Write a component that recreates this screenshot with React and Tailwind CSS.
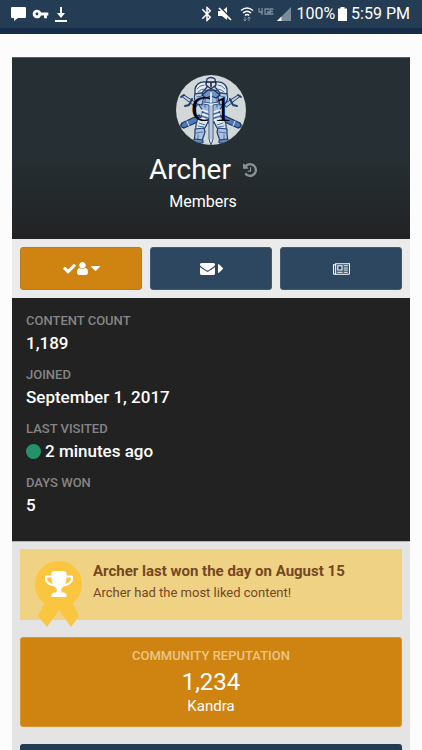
import { MdVpnKey, MdBluetooth } from "react-icons/md";

const icons = {
  check: {
    viewBox: "100 256 1592 1400",
    d: "M1671 566q0 40-28 68l-724 724-136 136q-28 28-68 28t-68-28l-136-136-362-362q-28-28-28-68t28-68l136-136q28-28 68-28t68 28l294 295 656-657q28-28 68-28t68 28l136 136q28 28 28 68z",
  },
  user: {
    viewBox: "256 128 1280 1536",
    d: "M1536 1399q0 109-62.5 187t-150.5 78h-854q-88 0-150.5-78t-62.5-187q0-85 8.5-160.5t31.5-152 58.5-131 94-89 134.5-34.5q131 128 313 128t313-128q76 0 134.5 34.5t94 89 58.5 131 31.5 152 8.5 160.5zm-256-887q0 159-112.5 271.5t-271.5 112.5-271.5-112.5-112.5-271.5 112.5-271.5 271.5-112.5 271.5 112.5 112.5 271.5z",
  },
  caretDown: {
    viewBox: "384 640 1024 576",
    d: "M1408 704q0 26-19 45l-448 448q-19 19-45 19t-45-19l-448-448q-19-19-19-45t19-45 45-19h896q26 0 45 19t19 45z",
  },
  caretRight: {
    viewBox: "0 0 576 1024",
    d: "M576 512q0 26-19 45l-448 448q-19 19-45 19t-45-19-19-45v-896q0-26 19-45t45-19 45 19l448 448q19 19 19 45z",
  },
  envelope: {
    viewBox: "0 256 1792 1408",
    d: "M1792 710v794q0 66-47 113t-113 47h-1472q-66 0-113-47t-47-113v-794q44 49 101 87 362 246 497 345 57 42 92.5 65.5t94.5 48 110 24.5h2q51 0 110-24.5t94.5-48 92.5-65.5q170-123 498-345 57-39 100-87zm0-294q0 79-49 151t-122 123q-376 261-468 325-10 7-42.5 31t-54 38.5-52 32.5-57.5 27-50 9h-2q-23 0-50-9t-57.5-27-52-32.5-54-38.5-42.5-31q-91-64-262-182.5t-205-142.5q-62-42-117-115.5t-55-136.5q0-78 41.5-130t118.5-52h1472q65 0 112.5 47t47.5 113z",
  },
  newspaper: {
    viewBox: "0 128 2048 1408",
    d: "M1024 512h-384v384h384v-384zm128 640v128h-640v-128h640zm0-768v640h-640v-640h640zm640 768v128h-512v-128h512zm0-256v128h-512v-128h512zm0-256v128h-512v-128h512zm0-256v128h-512v-128h512zm-1536 960v-960h-128v960q0 26 19 45t45 19 45-19 19-45zm1664 0v-1088h-1536v1088q0 33-11 64h1483q26 0 45-19t19-45zm128-1216v1216q0 80-56 136t-136 56h-1664q-80 0-136-56t-56-136v-1088h256v-128h1792z",
  },
  history: {
    viewBox: "0 128 1536 1536",
    d: "M1536 896q0 156-61 298t-164 245-245 164-298 61q-172 0-327-72.5t-264-204.5q-7-10-6.5-22.5t8.5-20.5l137-138q10-9 25-9 16 2 23 12 73 95 179 147t225 52q104 0 198.5-40.5t163.5-109.5 109.5-163.5 40.5-198.5-40.5-198.5-109.5-163.5-163.5-109.5-198.5-40.5q-98 0-188 35.5t-160 101.5l137 138q31 30 14 69-17 40-59 40h-448q-26 0-45-19t-19-45v-448q0-42 40-59 39-17 69 14l130 129q107-101 244.5-156.5t284.5-55.5q156 0 298 61t245 164 164 245 61 298zm-640-288v448q0 14-9 23t-23 9h-320q-14 0-23-9t-9-23v-64q0-14 9-23t23-9h224v-352q0-14 9-23t23-9h64q14 0 23 9t9 23z",
  },
  trophy: {
    viewBox: "64 128 1664 1536",
    d: "M522 883q-74-162-74-371h-256v96q0 78 94.5 162t235.5 113zm1078-275v-96h-256q0 209-74 371 141-29 235.5-113t94.5-162zm128-128v128q0 71-41.5 143t-112 130-173 97.5-215.5 44.5q-42 54-95 95-38 34-52.5 72.5t-14.5 89.5q0 54 30.5 91t97.5 37q75 0 133.5 45.5t58.5 114.5v64q0 14-9 23t-23 9h-832q-14 0-23-9t-9-23v-64q0-69 58.5-114.5t133.5-45.5q67 0 97.5-37t30.5-91q0-51-14.5-89.5t-52.5-72.5q-53-41-95-95-113-5-215.5-44.5t-173-97.5-112-130-41.5-143v-128q0-40 28-68t68-28h288v-96q0-66 47-113t113-47h576q66 0 113 47t47 113v96h288q40 0 68 28t28 68z",
  },
};

const Icon = ({ name, className }) => (
  <svg viewBox={icons[name].viewBox} className={`fill-current ${className}`} aria-hidden="true">
    <path d={icons[name].d} />
  </svg>
);

const StatusBar = () => (
  <header className="flex h-[34px] shrink-0 items-center justify-between border-b-6 border-[#172b4a] bg-[#253c55] pr-3 pl-[11px] text-white">
    <div className="flex items-center gap-[6px]">
      <svg viewBox="0 0 15 14" className="h-[14px] w-[15px] fill-current">
        <path d="M1 0h13q1 0 1 1v9q0 1-1 1H7l-4 3v-3H1q-1 0-1-1V1q0-1 1-1z" />
      </svg>
      <MdVpnKey className="h-[18px] w-[17px]" />
      <svg viewBox="0 0 12 15" className="h-[15px] w-3 fill-current">
        <path d="M5 0h2v6h3l-4 5-4-5h3zM0 13h12v2H0z" />
      </svg>
    </div>

    <div className="flex items-center">
      <MdBluetooth className="size-[18px]" />
      {/* muted speaker */}
      <svg viewBox="0 0 14 14" className="ml-[2px] size-[14px]">
        <path d="M0 4h4l5-4v13L4 9H0z" fill="currentColor" />
        <path d="M2 0l12 12" stroke="#253c55" strokeWidth="1.500" />
        <path d="M1 1l12 12" stroke="currentColor" strokeWidth="1.700" />
      </svg>
      <svg viewBox="0 0 14 15" className="ml-2 h-[15px] w-[14px]" fill="none" stroke="currentColor" strokeWidth="1.500">
        <path d="M1 3.500q6-5 12 0M3 6q4-3.500 8 0M5 8.500q2-2 4 0" />
        <path d="M5 10v4M3.500 12.500L5 14l1.500-1.500M9 14v-4M7.500 11.500L9 10l1.500 1.500" stroke="#8795a4" strokeWidth="1" />
      </svg>
      <svg viewBox="0 0 16 8" className="ml-1 mb-1 h-2 w-4" fill="none" stroke="#7c8b9a" strokeWidth="1.300">
        <path d="M1 0v4h4M4 0v7M11 1H7v5h4V4H9M15.500 1H12v5h3.500M12 3.500h3" />
      </svg>
      <svg viewBox="0 0 14 14" className="ml-[3px] size-[14px]">
        <path d="M14 0v14H0z" fill="#7c8b9a" />
        <path d="M4.500 9.500V14H0z" fill="#fff" />
      </svg>
      <span className="ml-[5px] text-base">100%</span>
      <svg viewBox="0 0 9 14" className="ml-[3px] h-[14px] w-[9px] fill-current">
        <path d="M2.500 0h4v1.500H9V14H0V1.500h2.500z" />
      </svg>
      <span className="ml-1 text-base">5:59 PM</span>
    </div>
  </header>
);

// one side of the knight, drawn again mirrored for the other
const KnightSide = () => (
  <g>
    {/* small sword */}
    <path d="M6 21l2-1 14 9-2 3z" fill="#b9c8dc" stroke="#27406f" />
    <path d="M9 31l4-1 3-6M5 22l3-2" fill="none" stroke="#27406f" strokeWidth="2" />
    {/* scabbard */}
    <path d="M6 48l17-8 3 5-18 8q-5-1-2-5z" fill="#4f7ab8" stroke="#1c3260" strokeWidth="1.300" />
    <path d="M11 46l2 5" stroke="#dce5ee" />
    {/* leg */}
    <path d="M23 42l10 3-4 8-9 2q-1-6 3-13z" fill="#dfe8f1" stroke="#243d6d" strokeWidth="1.200" />
    <path d="M19 54l9-1 1 4-3 9-8 1 1-8z" fill="#a9c0de" stroke="#243d6d" strokeWidth="1.200" />
    <path d="M23 48l6 2M22 51l6 1M20 58l7-1M22 60v6" fill="none" stroke="#4a70a8" />
    <path d="M14 67l5-3 8 1v3H14z" fill="#6386b6" stroke="#243d6d" />
    {/* shoulder and arm */}
    <path d="M30 7q-9-1-11 7v5l7-1 5-6z" fill="#e4ebf2" stroke="#243d6d" strokeWidth="1.300" />
    <path d="M19 19l7-1 2 4-2 8-5-1q-4-5-2-10z" fill="#b5c9e2" stroke="#243d6d" strokeWidth="1.200" />
    <path d="M21 14q3-4 7-4M22 17q3-3 6-3M21 22l5-1M22 26l4-2" fill="none" stroke="#4a70a8" />
  </g>
);

const Avatar = () => (
  <svg viewBox="0 0 70 70" className="size-[70px]" role="img" aria-label="Archer">
    <clipPath id="avatar-clip">
      <circle cx="35" cy="35" r="35" />
    </clipPath>
    <g clipPath="url(#avatar-clip)" strokeLinejoin="round" strokeLinecap="round">
      <rect width="70" height="70" fill="#d2d7d8" />

      {/* torso */}
      <path d="M26 14l9 3 9-3 3 16-4 6 3 8-11 5-11-5 3-8-4-6z" fill="#9dbade" stroke="#243d6d" strokeWidth="1.200" />
      <KnightSide />
      <g transform="translate(70 0) scale(-1 1)">
        <KnightSide />
      </g>
      <path d="M26 35l9 3 9-3M26 39l9 3 9-3M26 43l9 3 9-3M28 26l4 3M42 26l-4 3" fill="none" stroke="#edf2f6" strokeWidth="1.500" />
      <path d="M26 37l9 3 9-3M25 41l10 3 10-3M29 24v8M41 24v8" fill="none" stroke="#315687" />

      {/* hands on the pommel */}
      <path d="M26 20l6-5h6l6 5-4 3-5-2-5 2z" fill="#6f94c4" stroke="#1c3260" strokeWidth="1.300" />

      {/* helmet */}
      <path d="M31 4q4-3 8 0l1 6-5 4-5-4z" fill="#d5dde5" stroke="#1c3260" strokeWidth="1.300" />
      <path d="M31 7h3M36 7h3M35 7v5" stroke="#101d3a" strokeWidth="1.500" />

      <g fontFamily="Liberation Serif, serif" fontSize="35" fill="#05070c">
        <text x="15" y="46">C</text>
        <text x="38" y="46">1</text>
      </g>

      {/* sword */}
      <path d="M27 27l8 1 8-1v2l-6 1v34l-2 6-2-6V30l-6-1z" fill="#e3e8ed" stroke="#385a87" strokeWidth="1" />
      <path d="M35 18v9" stroke="#dce5ee" strokeWidth="2" />
      <path d="M35 31v33" stroke="#94a8c0" strokeWidth="1" />
    </g>
  </svg>
);

const ProfileHeader = () => (
  <section className="flex h-[182px] flex-col items-center border-t border-[#59605f] bg-linear-to-b from-[#263034] from-50% to-[#222324] pt-[17px] text-white">
    <Avatar />
    <div className="mt-[5px] pr-4">
      <div className="flex items-center gap-3">
        <h1 className="text-[28px] leading-10">Archer</h1>
        <button type="button" aria-label="Display name history" className="text-[#8c9092]">
          <Icon name="history" className="size-[14px]" />
        </button>
      </div>
    </div>
    <p className="pr-4 text-base">Members</p>
  </section>
);

const ActionButton = ({ label, className, children }) => (
  <button
    type="button"
    aria-label={label}
    className={`flex h-[43px] flex-1 items-center justify-center rounded-[3px] border text-white ${className}`}
  >
    {children}
  </button>
);

const stats = [
  { label: "Content Count", value: "1,189" },
  { label: "Joined", value: "September 1, 2017" },
  { label: "Last Visited", value: "2 minutes ago", online: true },
  { label: "Days Won", value: "5" },
];

const Stat = ({ label, value, online }) => (
  <div className="h-[54px]">
    <dt className="text-[13px] leading-5 font-medium text-[#858585] uppercase">{label}</dt>
    <dd className="flex items-center gap-1 text-[17px] leading-6 font-medium text-white">
      {online && <span className="size-[15px] rounded-full bg-[#249269]" />}
      {value}
    </dd>
  </div>
);

const DayWon = () => (
  <section className="flex h-[71px] gap-[11px] bg-[#efd284] pl-[15px] text-[#744823]">
    <div className="relative mt-3 size-[47px] shrink-0">
      <svg viewBox="0 0 47 66" className="absolute top-0 left-0 h-[66px] w-[47px]">
        <path d="M12 37L3 55l9 11 12-17 12 17 8-11-9-18z" fill="#fac640" />
        <circle cx="23.500" cy="23.500" r="23.500" fill="#fac640" />
      </svg>
      <Icon name="trophy" className="absolute top-[10px] left-[10px] h-[26px] w-7 text-white" />
    </div>
    <div className="pt-[11px]">
      <h2 className="text-[15px] leading-[22px] font-bold">Archer last won the day on August 15</h2>
      <p className="text-[13px] leading-[22px]">Archer had the most liked content!</p>
    </div>
  </section>
);

const Reputation = () => (
  <section className="mt-[17px] h-[90px] rounded-[3px] border border-[#d9952f] bg-[#cf8310] pt-2 text-center text-white">
    <h2 className="text-[13px] leading-5 font-medium text-[#ebc58c] uppercase">Community Reputation</h2>
    <p className="text-2xl leading-8">1,234</p>
    <p className="text-[15px] leading-4">Kandra</p>
  </section>
);

const App = () => {
  return (
    <div className="flex h-screen flex-col overflow-hidden bg-[#fcfcfc] font-['Roboto',sans-serif]">
      <StatusBar />
      <main className="mx-3 mt-[23px] flex-1 bg-[#e4e4e4]">
        <ProfileHeader />
        <nav className="flex gap-2 bg-[#ebebeb] p-2">
          <ActionButton label="Following" className="gap-px border-[#b87b25] bg-[#cf8310]">
            <Icon name="check" className="h-3 w-[13px]" />
            <Icon name="user" className="h-[13px] w-[11px]" />
            <Icon name="caretDown" className="ml-[2px] h-[5px] w-[9px]" />
          </ActionButton>
          <ActionButton label="Message" className="gap-[3px] border-[#415a72] bg-[#2d4760]">
            <Icon name="envelope" className="h-3 w-[15px]" />
            <Icon name="caretRight" className="h-[9px] w-[5px]" />
          </ActionButton>
          <ActionButton label="See activity" className="border-[#415a72] bg-[#2d4760]">
            <Icon name="newspaper" className="h-3 w-[17px]" />
          </ActionButton>
        </nav>
        <dl className="h-[243px] bg-[#222222] px-[14px] pt-[13px]">
          {stats.map((stat) => (
            <Stat key={stat.label} {...stat} />
          ))}
        </dl>
        <div className="border-t border-[#b5b5b5] px-2 pt-[7px]">
          <DayWon />
          <Reputation />
          <div className="mt-[17px] h-16 rounded-[3px] bg-[#243b53]" />
        </div>
      </main>
    </div>
  );
};

export default App;
